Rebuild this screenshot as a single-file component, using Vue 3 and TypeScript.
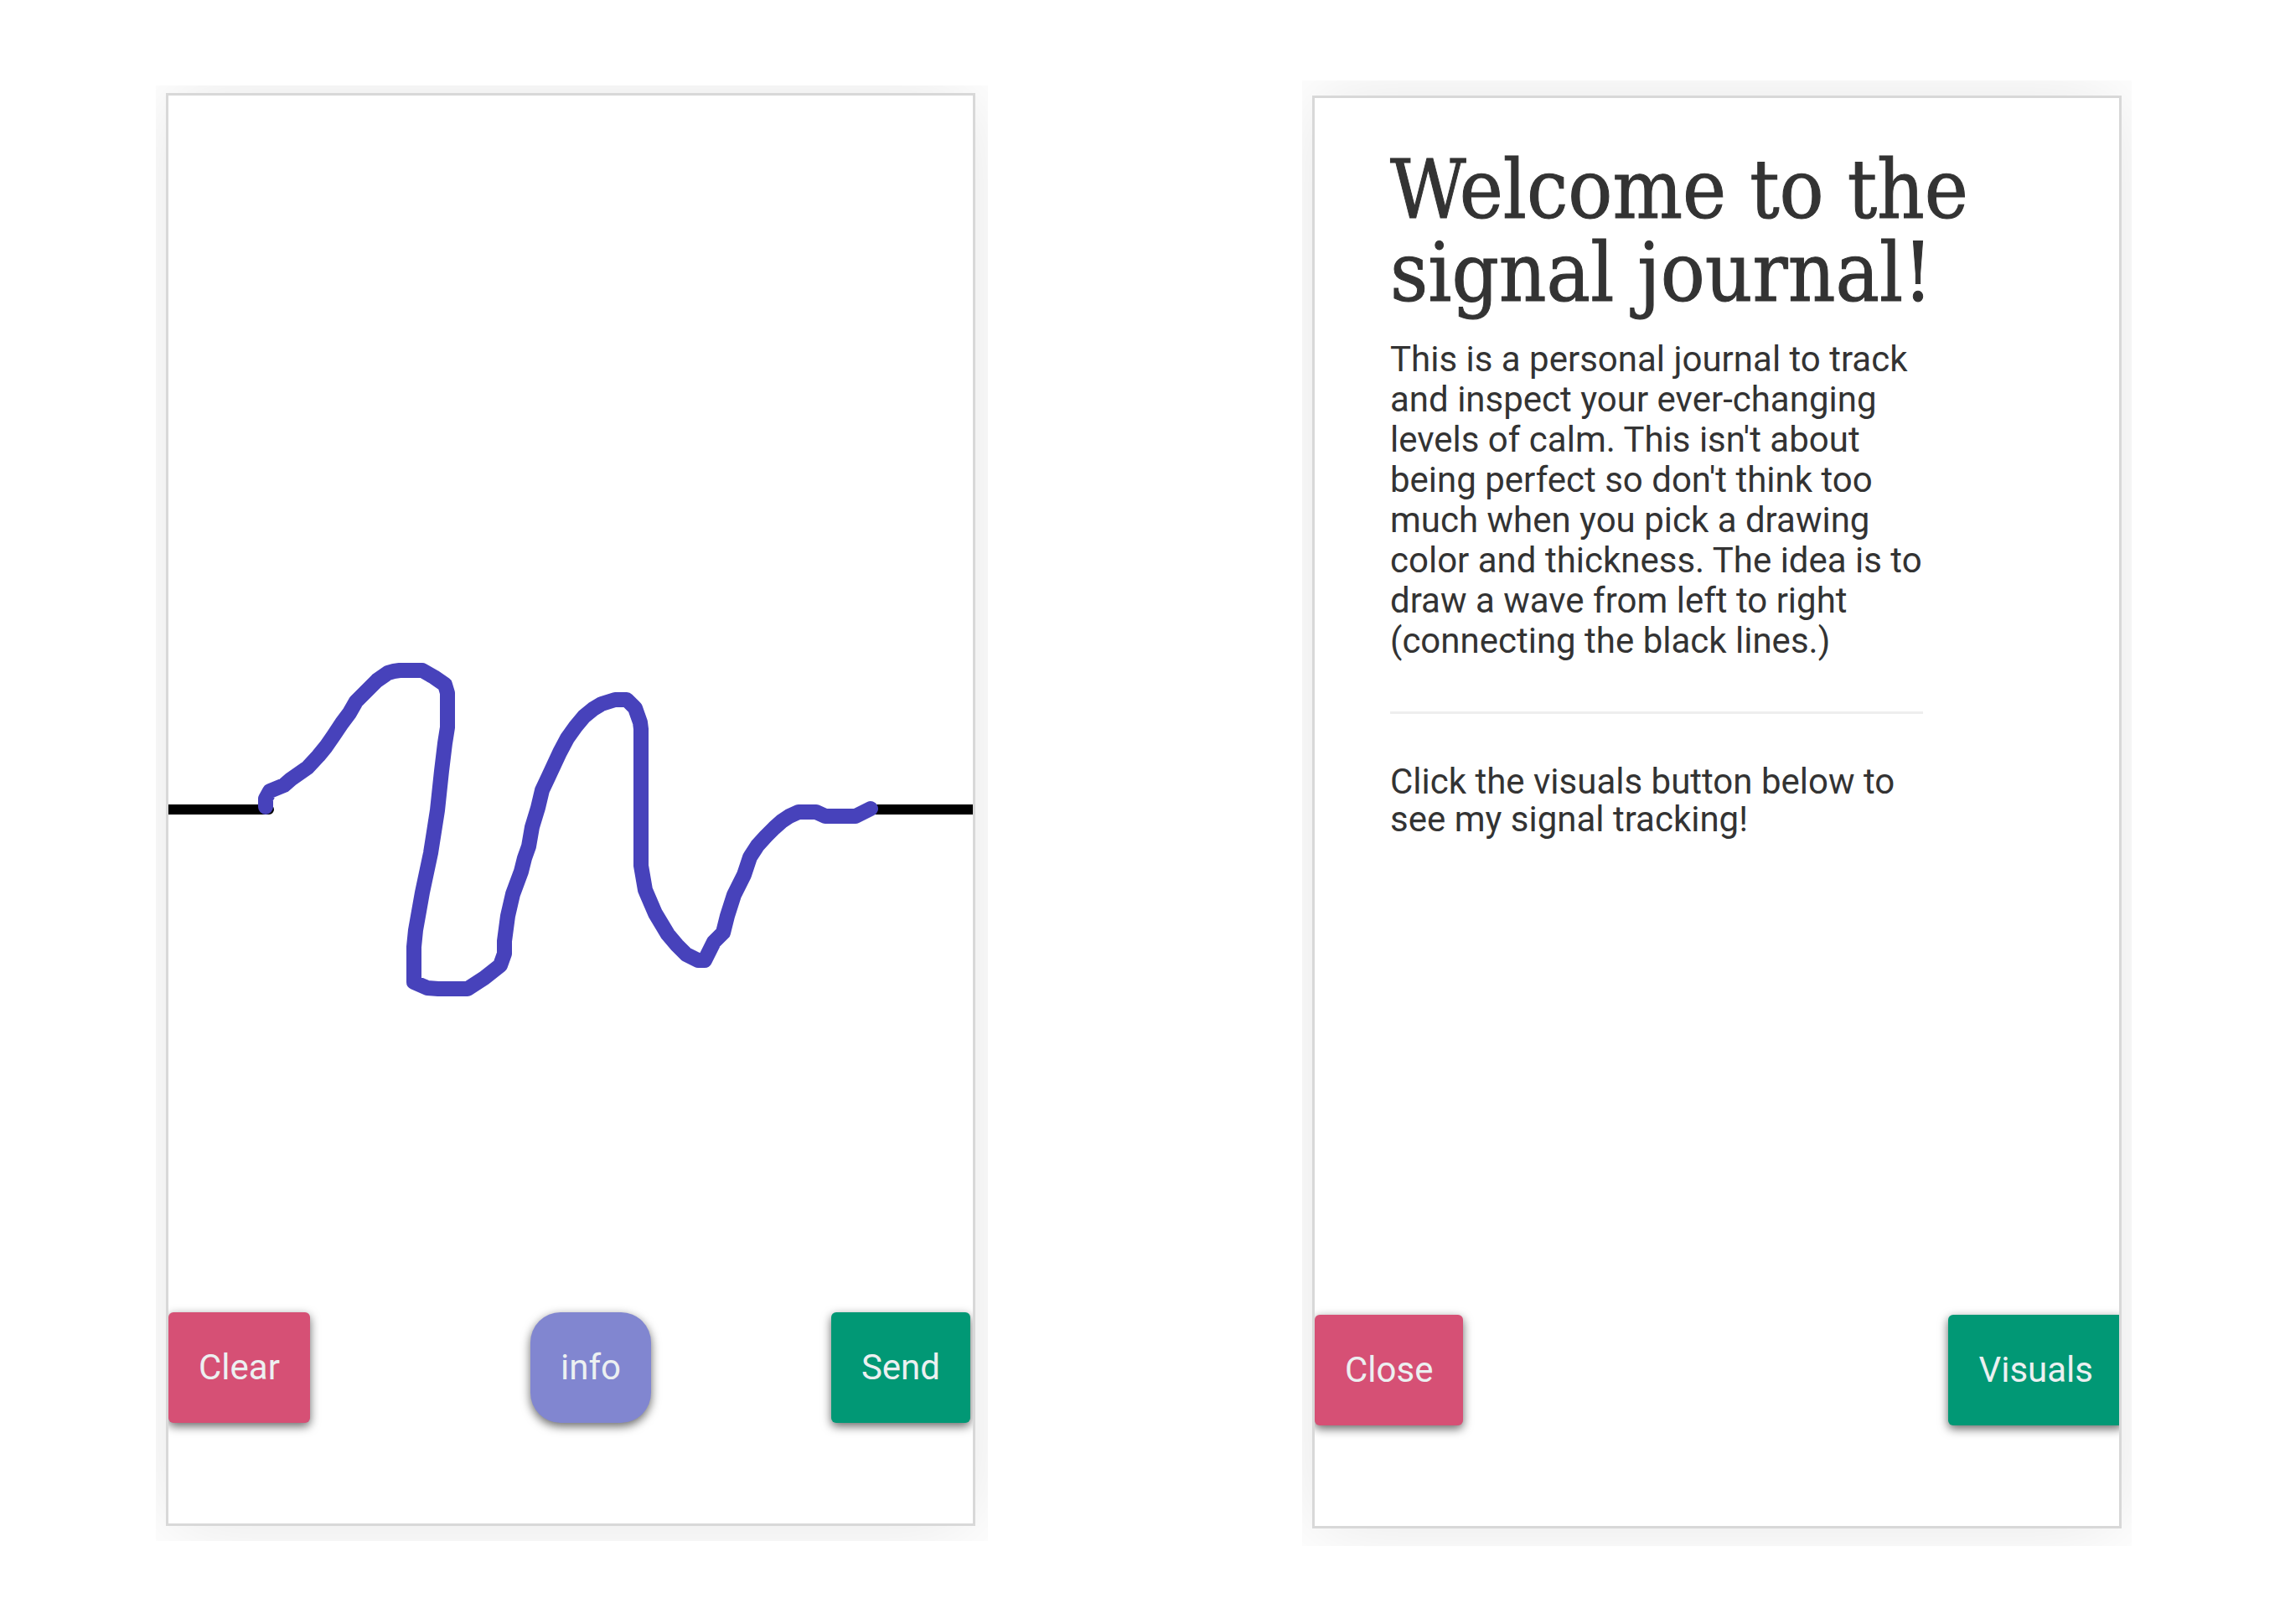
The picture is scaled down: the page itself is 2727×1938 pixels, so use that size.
<script setup lang="ts">
type Point = [number, number]

const wave: Point[] = [
  [116, 849], [116, 839], [121, 830], [138, 823], [146, 816], [166, 802], [179, 788],
  [188, 777], [197, 764], [207, 749], [216, 737], [224, 723], [236, 711], [249, 698],
  [262, 689], [269, 687], [276, 686], [303, 686], [317, 694], [330, 703], [333, 713],
  [333, 754], [330, 773], [326, 806], [321, 853], [313, 904], [303, 951], [295, 996],
  [293, 1016], [293, 1058], [309, 1065], [322, 1066], [357, 1066], [377, 1053],
  [396, 1038], [401, 1024], [401, 1009], [405, 979], [411, 953], [421, 926], [425, 910],
  [430, 896], [434, 873], [441, 850], [446, 829], [454, 812], [467, 784], [476, 767],
  [486, 753], [496, 741], [507, 732], [517, 726], [533, 721], [547, 721], [557, 731],
  [563, 748], [564, 756], [564, 919], [569, 948], [581, 976], [596, 1001], [607, 1014],
  [618, 1025], [632, 1032], [640, 1032], [651, 1010], [662, 999], [667, 979], [675, 954],
  [687, 930], [694, 909], [703, 895], [713, 884], [723, 874], [732, 866], [741, 860],
  [752, 855], [773, 855], [784, 860], [820, 860], [838, 851],
]

const wavePoints = wave.map((p) => p.join(',')).join(' ')
</script>

<template>
  <main class="page">
    <section class="mat mat-draw">
      <div class="screen">
        <svg class="canvas" viewBox="0 0 960 1704" aria-label="Drawing canvas">
          <path d="M0 846H120a6 6 0 0 1 0 12H0zM832 846H960v12H832z" fill="#000" />
          <polyline
            :points="wavePoints"
            fill="none"
            stroke="#4742bb"
            stroke-width="18"
            stroke-linecap="round"
            stroke-linejoin="round"
          />
        </svg>
        <div class="actions actions-draw">
          <button type="button" class="btn red">Clear</button>
          <button type="button" class="btn info">info</button>
          <button type="button" class="btn green send">Send</button>
        </div>
      </div>
    </section>

    <section class="mat mat-info">
      <div class="screen">
        <article class="intro">
          <h1>Welcome to the signal journal!</h1>
          <p class="lead">
            This is a personal journal to track and inspect your ever-changing levels of calm. This
            isn't about being perfect so don't think too much when you pick a drawing color and
            thickness. The idea is to draw a wave from left to right (connecting the black lines.)
          </p>
          <hr />
          <p class="hint">Click the visuals button below to see my signal tracking!</p>
        </article>
        <div class="actions">
          <button type="button" class="btn red">Close</button>
          <button type="button" class="btn green visuals">Visuals</button>
        </div>
      </div>
    </section>
  </main>
</template>

<style>
body {
  margin: 0;
  background: #fff;
}
</style>

<style scoped>
.page {
  display: flex;
  align-items: flex-start;
  gap: 375px;
  padding: 96px 183px 90px 186px;
  font-family: Roboto, 'Liberation Sans', sans-serif;
  font-size: 42px;
  color: #333;
}

.mat {
  flex: 1 1 0;
  min-width: 0;
  overflow: hidden;
}

.mat-draw {
  margin-top: 6px;
  padding: 9px 15px 18px 12px;
}

.mat-info {
  padding: 18px 12px 21px;
}

.screen {
  position: relative;
  display: flex;
  flex-direction: column;
  justify-content: space-between;
  aspect-ratio: 320 / 568;
  overflow: hidden;
  border: 3px solid #d8d8d8;
  background: #fff;
  box-shadow: 0 0 90px rgba(0, 0, 0, 0.1);
}

.canvas {
  position: absolute;
  inset: 0;
  width: 100%;
  height: 100%;
}

.actions {
  position: relative;
  display: flex;
  justify-content: space-between;
  margin-top: auto;
  padding-bottom: 120px;
}

.actions-draw {
  display: grid;
  grid-template-columns: 45% auto 1fr;
  justify-items: start;
}

.btn {
  padding: 36px;
  border: 0;
  border-radius: 6px;
  font: inherit;
  line-height: 60px;
  color: #ecf0f1;
  box-shadow: 0 4px 12px rgba(0, 0, 0, 0.6);
  cursor: pointer;
}

.red {
  background: #d65075;
}

.green {
  background: #019875;
}

.info {
  border-radius: 36px;
  background: #8186d0;
}

.send {
  justify-self: end;
  margin-right: 3px;
}

.visuals {
  margin-right: -5px;
}

.intro {
  padding: 60px 90px 0;
}

h1 {
  margin: 0 0 30px;
  font-family: 'DejaVu Serif Condensed', 'DejaVu Serif', serif;
  font-size: 98px;
  font-weight: 400;
  line-height: 99px;
  -webkit-text-stroke: 1px #333;
}

p {
  max-width: 640px;
  margin: 0;
}

.lead {
  line-height: 48px;
}

.hint {
  line-height: 45px;
}

hr {
  max-width: 636px;
  height: 3px;
  margin: 60px 0 58px;
  border: 0;
  background: #eee;
}
</style>
